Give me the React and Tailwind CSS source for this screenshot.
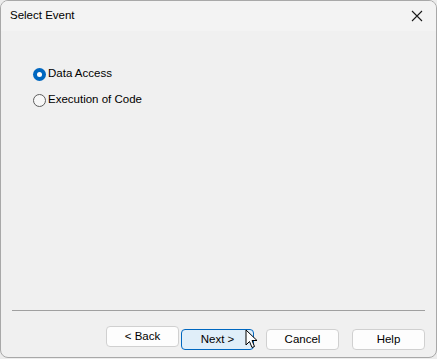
import React from 'react';

function Radio({ checked, label }) {
  return (
    <label className="flex items-center gap-[2px] h-[20px]">
      {checked ? (
        <span className="flex h-[13px] w-[13px] items-center justify-center rounded-full bg-[#0067c0]">
          <span className="h-[5px] w-[5px] rounded-full bg-white" />
        </span>
      ) : (
        <span className="h-[13px] w-[13px] rounded-full border border-[#5d5d5d] bg-[#f7f7f7]" />
      )}
      <span className="text-[11.5px] text-black">{label}</span>
    </label>
  );
}

function Btn({ children, primary }) {
  return (
    <button
      type="button"
      className={`h-[21px] w-[73px] rounded-[4px] border text-[11.5px] text-black ${
        primary ? 'border-[#0067c0] bg-[#e0eef9]' : 'border-[#d0d0d0] bg-[#fdfdfd]'
      }`}
    >
      {children}
    </button>
  );
}

export default function App() {
  return (
    <div className="h-[359px] w-[437px] bg-[#ececec]" style={{ fontFamily: '"Liberation Sans", Arial, sans-serif' }}>
      <div className="flex h-[358px] w-[437px] flex-col overflow-hidden rounded-[8px] border border-[#a8a8a8] bg-[#f0f0f0]">
        <div className="flex h-[30px] shrink-0 items-center justify-between bg-[#f3f3f3] pl-[9px] pr-[10px]">
          <span className="text-[11.5px] text-black">Select Event</span>
          <svg width="12" height="12" viewBox="0 0 12 12" className="mr-[3px]">
            <path d="M1 1 L11 11 M11 1 L1 11" stroke="#1a1a1a" strokeWidth="1.1" />
          </svg>
        </div>
        <div className="flex flex-1 flex-col">
          <div className="flex flex-col gap-[6px] pl-[32px] pt-[33px]">
            <Radio checked label="Data Access" />
            <Radio label="Execution of Code" />
          </div>
          <div className="flex-1" />
          <div className="mx-[11px] h-px bg-[#a0a0a0]" />
          <div className="flex justify-end pb-[7px] pr-[11px] pt-[15px]">
            <div className="relative flex">
              <Btn>&lt; Back</Btn>
              <div className="ml-[2px]">
                <Btn primary>Next &gt;</Btn>
              </div>
              <div className="ml-[12px]">
                <Btn>Cancel</Btn>
              </div>
              <div className="ml-[13px]">
                <Btn>Help</Btn>
              </div>
              <svg width="14" height="20" viewBox="0 0 14 20" className="absolute left-[139px] top-[3px]">
                <path d="M1 1 L1 16 L4.5 12.5 L7 18.5 L9.5 17.5 L7 11.5 L12 11.5 Z" fill="white" stroke="black" strokeWidth="1" strokeLinejoin="round" />
              </svg>
            </div>
          </div>
        </div>
      </div>
    </div>
  );
}
